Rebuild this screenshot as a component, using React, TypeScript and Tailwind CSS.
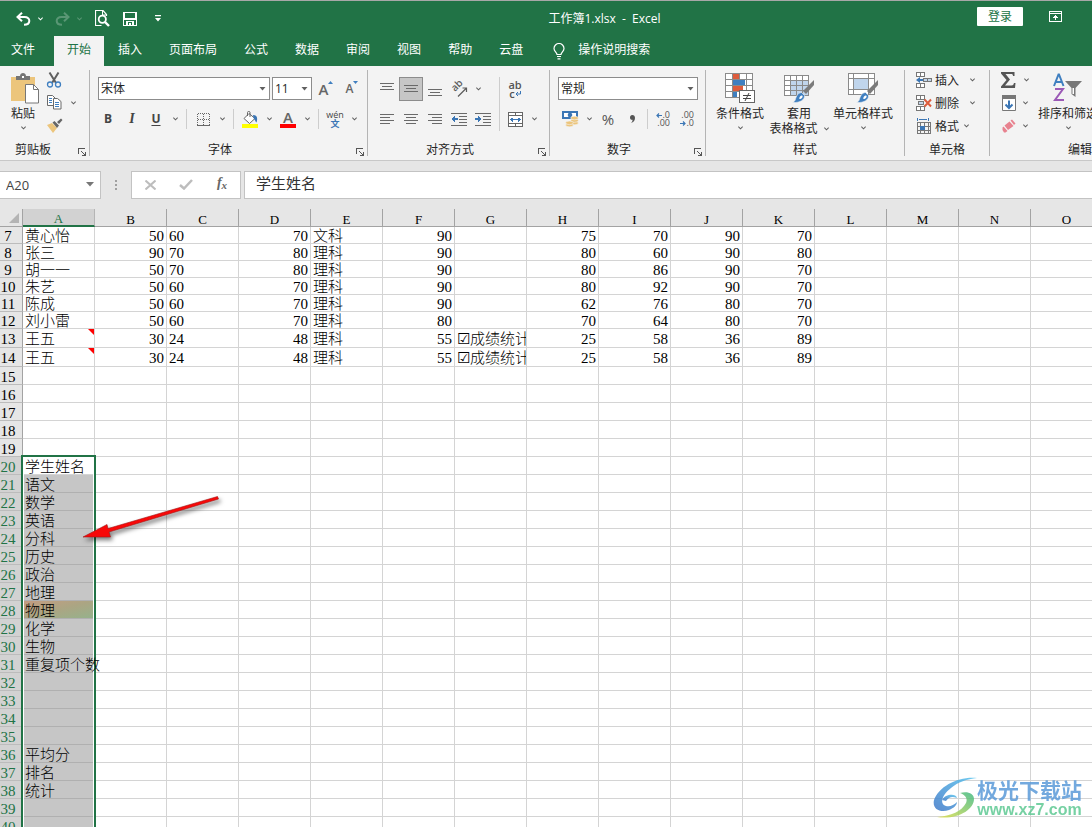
import React from "react";

const UI = "font-['Open_Sans','Noto_Sans_CJK_SC',sans-serif]";

function Chevron({ className = "" }: { className?: string }) {
  return (
    <svg width="5" height="4" viewBox="0 0 5 4" className={className} fill="none" stroke="currentColor" strokeWidth="1.1">
      <path d="M.3.6 2.5 2.8 4.7.6" />
    </svg>
  );
}

function Caret() {
  return (
    <svg width="7" height="4" viewBox="0 0 7 4" className="pointer-events-none absolute top-1/2 right-1 -translate-y-1/2" fill="#606060">
      <path d="M.5 0h6L3.500 3.500z" />
    </svg>
  );
}

type BtnProps = { label: string; className?: string; children: React.ReactNode };

function IconButton({ label, className = "w-6", children }: BtnProps) {
  return (
    <button type="button" aria-label={label} className={`flex h-6 shrink-0 items-center justify-center ${className}`}>
      {children}
    </button>
  );
}

function DropButton({ label, className = "" }: { label: string; className?: string }) {
  return (
    <button type="button" aria-label={label} className={`flex h-6 w-3.5 shrink-0 items-center justify-center text-[#606060] ${className}`}>
      <Chevron />
    </button>
  );
}

function Divider({ className = "mx-1 h-5" }: { className?: string }) {
  return <div className={`w-px shrink-0 bg-[#cdcdcd] ${className}`} />;
}

function Combo({ label, value, className }: { label: string; value: string; className: string }) {
  return (
    <div className={`relative h-[23px] shrink-0 ${className}`}>
      <select aria-label={label} defaultValue={value} className="h-full w-full appearance-none border border-[#8c8c8c] bg-white px-0.5 text-xs text-[#262626]">
        <option>{value}</option>
      </select>
      <Caret />
    </div>
  );
}

function Group({ label, className, launcher = true, labelClass = "", children }: { label: string; className: string; launcher?: boolean; labelClass?: string; children: React.ReactNode }) {
  return (
    <section aria-label={label} className={`flex shrink-0 flex-col ${className}`}>
      <div className="h-[74px]">{children}</div>
      <div className="flex h-5 items-center">
        <span className={`flex-1 text-center leading-[18px] ${labelClass}`}>{label}</span>
        {launcher && (
          <button type="button" aria-label={`${label}设置`} className="flex w-[11px] items-end justify-start pt-1">
            <svg width="9" height="9" viewBox="0 0 9 9" fill="none" stroke="#555" shapeRendering="crispEdges">
              <path d="M.5 6V.5H7M3 3l4 4M7.500 3.500v4H3.500" />
            </svg>
          </button>
        )}
      </div>
    </section>
  );
}

function GroupLine() {
  return <div className="mt-1 h-[86px] w-px shrink-0 bg-[#b4b4b4]" />;
}

function Lines({ rows, blue }: { rows: [number, number, number][]; blue?: "left" | "right" }) {
  return (
    <svg width="16" height="14" viewBox="0 0 16 14" shapeRendering="crispEdges">
      {rows.map(([x, y, w]) => (
        <rect key={y} x={x} y={y} width={w} height="1" fill="#6a6a6a" />
      ))}
      {blue && (
        <path d={blue === "left" ? "M0 7l4-3v2h3v2H4v2z" : "M7 7L3 4v2H0v2h3v2z"} fill="#3b76b5" />
      )}
    </svg>
  );
}

function Brush() {
  return (
    <g>
      <path d="M30 7v5l-8 9-3-3z" fill="#7b7b7b" />
      <path d="M17.500 19.500l3 3c.5 4-4 7.500-12 7 3.500-1.500 2.500-3.500 4-6 1-2.500 3-4 5-4z" fill="#3f7fc0" stroke="#f3f3f3" strokeWidth=".6" />
      <path d="M16 23.500c1.500-1.500 3-1 2.500.5-.5 1.500-2 2.500-3.500 1.500z" fill="#fff" />
    </g>
  );
}

function BigButton({ icon, lines, inlineChevron, className }: { icon: React.ReactNode; lines: string[]; inlineChevron?: boolean; className: string }) {
  return (
    <button type="button" className={`flex shrink-0 flex-col items-center pt-[7px] leading-[15px] whitespace-nowrap ${className}`}>
      {icon}
      <span className="mt-[3px]">{lines[0]}</span>
      {inlineChevron ? (
        <span className="flex items-center gap-1.5">
          {lines[1]}
          <Chevron className="text-[#606060]" />
        </span>
      ) : (
        <Chevron className="mt-[5px] text-[#606060]" />
      )}
    </button>
  );
}

function CellIcon({ kind }: { kind: "insert" | "delete" | "format" }) {
  if (kind === "format")
    return (
      <svg width="16" height="16" viewBox="0 0 16 16" shapeRendering="crispEdges" fill="none">
        <path d="M1.500 0v3M12.500 0v3M3 1.500h8" stroke="#3b76b5" />
        <path d="M1.500 4.500h13v11h-13zM1 8.500h14M1 12.500h14M4.500 4v12M8.500 4v12M12.500 4v12" stroke="#777" />
        <path d="M4 8h5v4H4z" fill="#3b76b5" />
      </svg>
    );
  return (
    <svg width="16" height="16" viewBox="0 0 16 16" fill="none">
      <g shapeRendering="crispEdges" stroke="#777">
        <path d="M.5.5h4v4h-4zM4.500.5h4v4h-4zM.5 11.500h4v4h-4zM4.500 11.500h4v4h-4z" fill="#fff" />
        {kind === "insert" ? (
          <path d="M7.500 6.500h8v3h-8zM11.500 6v4" fill="#c3d6ea" />
        ) : (
          <path d="M2.500 6.500h5v3h-5z" fill="#c3d6ea" />
        )}
      </g>
      {kind === "insert" ? (
        <path d="M0 8l4-3v2h3v2H4v2z" fill="#3b76b5" />
      ) : (
        <path d="M8.500 4.500l6.500 7M15 4.500l-6.500 7" stroke="#dd5c3c" strokeWidth="2" />
      )}
    </svg>
  );
}

function TitleBar() {
  return (
    <header className="flex h-[35px] shrink-0 items-center text-white">
      <div className="flex w-[232px] shrink-0 items-center pl-4">
        <button type="button" aria-label="撤消" className="w-[15px]">
          <svg width="15" height="14" viewBox="0 0 15 14" fill="none" stroke="#fff" strokeWidth="2">
            <path d="M6 .8 1.500 5 6 9.200M2 5h6.500c6.500 0 6.500 7.800-.5 7.800" />
          </svg>
        </button>
        <button type="button" aria-label="撤消列表" className="flex w-[18px] justify-center"><Chevron /></button>
        <button type="button" aria-label="恢复" className="ml-1.5 w-[15px] opacity-25">
          <svg width="15" height="14" viewBox="0 0 15 14" fill="none" stroke="#fff" strokeWidth="2">
            <path d="M9 .8 13.500 5 9 9.200M13 5H6.500C0 5 0 12.800 7 12.800" />
          </svg>
        </button>
        <button type="button" aria-label="恢复列表" className="flex w-[18px] justify-center opacity-25"><Chevron /></button>
        <button type="button" aria-label="打印预览" className="ml-[7px] w-[15px]">
          <svg width="15" height="17" viewBox="0 0 15 17" fill="none" stroke="#fff">
            <path d="M11.500 6V4.500L8 .5H.5v15h6" strokeWidth="1.200" />
            <path d="M7.500.5V5h4" />
            <circle cx="7.300" cy="9.300" r="3.600" strokeWidth="1.800" />
            <path d="M10 12l4 4" strokeWidth="2.400" />
          </svg>
        </button>
        <button type="button" aria-label="保存" className="ml-[13px] w-[15px]">
          <svg width="14" height="14" viewBox="0 0 14 14" shapeRendering="crispEdges">
            <path fillRule="evenodd" fill="#fff" d="M0 0h14v14H0zM2 1v5h10V1zM1 8v5h2v-4h8v4h2V8zM5 10v3h1v-2h2v2h1v-3z" />
          </svg>
        </button>
        <button type="button" aria-label="自定义快速访问工具栏" className="ml-[17px] w-[7px]">
          <svg width="6" height="7" viewBox="0 0 6 7" fill="#fff">
            <path d="M0 0h6v1.200H0zM0 3h6L3 6.500z" />
          </svg>
        </button>
      </div>
      <h1 className="flex-1 pt-px text-center text-xs whitespace-pre">{"工作簿1.xlsx  -  Excel"}</h1>
      <div className="flex w-[115px] shrink-0 items-center">
        <button type="button" className="mb-1 h-[19px] w-[46px] rounded-[1px] bg-white text-xs text-[#217346]">登录</button>
        <button type="button" aria-label="功能区显示选项" className="mb-1 ml-[26px]">
          <svg width="13" height="11" viewBox="0 0 13 11" fill="none" stroke="#fff" shapeRendering="crispEdges">
            <path d="M.5.5h12v9.500H.5zM1 2.500h11M6.500 4v5M5 5.500h3M4 6.500h5" />
          </svg>
        </button>
      </div>
    </header>
  );
}

const TABS = ["插入", "页面布局", "公式", "数据", "审阅", "视图", "帮助", "云盘"];

function Tabs() {
  return (
    <nav className="flex h-[30px] shrink-0 items-stretch gap-px text-xs whitespace-nowrap text-white">
      <button type="button" className="pr-[18px] pl-[11px] pb-0.5">文件</button>
      <button type="button" className="bg-[#f3f3f3] px-[13px] pb-0.5 text-[#217346]">开始</button>
      {TABS.map((t) => (
        <button type="button" key={t} className="px-[13px] pb-0.5">{t}</button>
      ))}
      <button type="button" className="flex items-center gap-[13px] pb-0.5 pl-4">
        <svg width="12" height="17" viewBox="0 0 12 17" fill="none" stroke="#fff" strokeWidth="1.200" className="mt-0.5">
          <path d="M4 11.500C4 9.500 1 8.500 1 5.500a5 5 0 0 1 10 0c0 3-3 4-3 6zM4 13.500h4M4.500 15.800h3" />
        </svg>
        操作说明搜索
      </button>
    </nav>
  );
}

function Ribbon() {
  return (
    <div className="flex h-[94px] shrink-0 overflow-hidden bg-[#f3f3f3] text-xs text-[#262626]">
      <Group label="剪贴板" className="w-[89px]" labelClass="pr-3">
        <div className="flex">
          <BigButton
            className="w-[46px]"
            lines={["粘贴"]}
            icon={
              <svg width="28" height="31" viewBox="0 0 28 31" className="-mb-px ml-1" fill="none">
                <path d="M0 4h24v24H0z" fill="#ecc57c" />
                <path d="M5 7V3h4c0-4 6-4 6 0h4v4z" fill="#757575" />
                <path d="M11 3h2v2h-2z" fill="#fff" />
                <path d="M14.500 11.500h8l5 5v13.500h-13z" fill="#fff" stroke="#777" />
                <path d="M22.500 11.500v5h5" stroke="#777" />
              </svg>
            }
          />
          <div className="pt-0.5">
            <button type="button" aria-label="剪切" className="flex h-[23px] items-center">
              <svg width="16" height="16" viewBox="0 0 16 16" fill="none">
                <path d="M3.500.5 10 11M12.500.5 6 11" stroke="#606060" strokeWidth="2" />
                <circle cx="4" cy="12.500" r="2.500" stroke="#3f7fc0" strokeWidth="1.300" />
                <circle cx="12" cy="12.500" r="2.500" stroke="#3f7fc0" strokeWidth="1.300" />
              </svg>
            </button>
            <div className="flex h-[23px] items-center">
              <button type="button" aria-label="复制">
                <svg width="16" height="15" viewBox="0 0 16 15" fill="#fff" stroke="#6a6a6a">
                  <path d="M1.500.5h5l3 3v7h-8z" />
                  <path d="M7.500 3.500h4l3.500 3v7.500H7.500z" />
                  <path d="M3 3.500h3M3 5.500h3M3 7.500h3M9 7.500h4M9 9.500h4M9 11.500h4" stroke="#3f7fc0" />
                </svg>
              </button>
              <DropButton label="复制选项" className="ml-1" />
            </div>
            <button type="button" aria-label="格式刷" className="flex h-[23px] items-center">
              <svg width="17" height="15" viewBox="0 0 17 15">
                <path d="M1 7l5-2 5 5-4 5z" fill="#ecc57c" />
                <path d="M6.500 4.500l2-1.500L13 7.500l-2 2.500zM11 4l4-3.500L16.500 2 13 6z" fill="#666" />
              </svg>
            </button>
          </div>
        </div>
      </Group>
      <GroupLine />

      <Group label="字体" className="w-[277px]" labelClass="pr-1.5">
        <div className="flex flex-col gap-[7px] pt-[11px]">
          <div className="flex h-[23px] items-center gap-0.5 pl-2">
            <Combo label="字体" value="宋体" className="w-[172px]" />
            <Combo label="字号" value="11" className="w-10" />
            <IconButton label="增大字号" className="w-6">
              <span className="text-[15px] leading-5 font-semibold text-[#666]">A</span>
              <svg width="5" height="3" viewBox="0 0 5 3" className="mb-3" fill="#3f7fc0"><path d="M0 3h5L2.500 0z" /></svg>
            </IconButton>
            <IconButton label="减小字号">
              <span className="text-xs leading-5 font-semibold text-[#666]">A</span>
              <svg width="5" height="3" viewBox="0 0 5 3" className="mb-3" fill="#3f7fc0"><path d="M0 0h5L2.500 3z" /></svg>
            </IconButton>
          </div>
          <div className="flex items-center pl-1.5 text-xs text-[#444]">
            <IconButton label="加粗"><b>B</b></IconButton>
            <IconButton label="倾斜"><i className="font-['Liberation_Serif',serif] text-sm font-bold">I</i></IconButton>
            <IconButton label="下划线"><b className="underline underline-offset-2">U</b></IconButton>
            <DropButton label="下划线选项" />
            <Divider />
            <IconButton label="边框">
              <svg width="13" height="13" viewBox="0 0 13 13" fill="none" stroke="#666" shapeRendering="crispEdges">
                <path d="M.5.5h12M.5 6.500h12M.5.5v12M6.500.5v12M12.500.5v12" strokeDasharray="1 1" />
                <path d="M0 12.500h13" />
              </svg>
            </IconButton>
            <DropButton label="边框选项" />
            <Divider />
            <IconButton label="填充颜色">
              <svg width="16" height="17" viewBox="0 0 16 17" fill="none">
                <path d="M7 2.500l6 5-5.500 5L2 7.500z" fill="#fff" stroke="#666" />
                <path d="M5.500 5V1.500c0-1.500 2.500-1.500 2.500 0V6" stroke="#666" />
                <path d="M11 4c4 0 5 3 3.500 7.500-1 0-1.500-3-3-4.500z" fill="#3b76b5" />
                <path d="M0 13h16v4H0z" fill="#ff0" />
              </svg>
            </IconButton>
            <DropButton label="填充颜色选项" />
            <IconButton label="字体颜色" className="w-6 flex-col">
              <span className="text-[15px] leading-[13px] font-semibold text-[#666]">A</span>
              <span className="h-1 w-4 bg-[#f00]" />
            </IconButton>
            <DropButton label="字体颜色选项" />
            <Divider />
            <IconButton label="拼音指南" className="w-6 flex-col">
              <span className="text-[9px] leading-[9px]">wén</span>
              <span className="text-[9px] leading-[10px] font-bold text-[#3b76b5]">文</span>
            </IconButton>
            <DropButton label="拼音选项" />
          </div>
        </div>
      </Group>
      <GroupLine />

      <Group label="对齐方式" className="w-[181px]" labelClass="pr-1.5">
        <div className="flex pt-[11px] pl-[7px]">
          <div className="flex flex-col gap-1.5">
            <div className="flex">
              <IconButton label="顶端对齐"><Lines rows={[[1, 1, 14], [3, 4, 10], [1, 7, 14]]} /></IconButton>
              <IconButton label="垂直居中" className="w-6 border border-[#8c8c8c] bg-[#c6c6c6]"><Lines rows={[[1, 3, 14], [3, 6, 10], [1, 9, 14]]} /></IconButton>
              <IconButton label="底端对齐"><Lines rows={[[1, 7, 14], [3, 10, 10], [1, 13, 14]]} /></IconButton>
              <IconButton label="方向">
                <svg width="18" height="18" viewBox="0 0 18 18" fill="none" stroke="#5c5c5c">
                  <g transform="translate(5 12) rotate(-45)">
                    <text x="0" y="0" fontSize="10" fontWeight="600" fill="#5c5c5c" stroke="none">ab</text>
                  </g>
                  <path d="M8 16.500 16 8.500M12.500 8h4v4" strokeWidth="1.200" />
                </svg>
              </IconButton>
              <DropButton label="方向选项" />
            </div>
            <div className="flex">
              <IconButton label="左对齐"><Lines rows={[[1, 2, 14], [1, 5, 10], [1, 8, 14], [1, 11, 10]]} /></IconButton>
              <IconButton label="居中"><Lines rows={[[1, 2, 14], [3, 5, 10], [1, 8, 14], [3, 11, 10]]} /></IconButton>
              <IconButton label="右对齐"><Lines rows={[[1, 2, 14], [5, 5, 10], [1, 8, 14], [5, 11, 10]]} /></IconButton>
              <IconButton label="减少缩进量"><Lines blue="left" rows={[[0, 1, 16], [8, 4, 8], [8, 7, 8], [8, 10, 8], [0, 13, 16]]} /></IconButton>
              <IconButton label="增加缩进量"><Lines blue="right" rows={[[0, 1, 16], [8, 4, 8], [8, 7, 8], [8, 10, 8], [0, 13, 16]]} /></IconButton>
            </div>
          </div>
          <Divider className="mr-[3px] ml-1 h-[54px]" />
          <div className="flex flex-col gap-1.5">
            <IconButton label="自动换行" className="w-6 flex-col">
              <span className="text-[11px] leading-[9px] font-semibold text-[#555]">ab</span>
              <span className="flex items-center text-[11px] leading-[9px] font-semibold text-[#555]">
                c
                <svg width="6" height="6" viewBox="0 0 6 6" fill="none" stroke="#3b76b5"><path d="M5.500 0v3H1M3 1 1 3l2 2" /></svg>
              </span>
            </IconButton>
            <div className="flex">
              <IconButton label="合并后居中">
                <svg width="15" height="15" viewBox="0 0 15 15" fill="none" stroke="#666" shapeRendering="crispEdges">
                  <path d="M.5.5h14v14H.5zM0 3.500h15M0 11.500h15M7.500 0v3M7.500 12v3" fill="#fff" />
                  <path d="M2 7.500h11M3.500 6v3M4.500 5.500v4M10.500 5.500v4M11.500 6v3" stroke="#3b76b5" />
                </svg>
              </IconButton>
              <DropButton label="合并选项" />
            </div>
          </div>
        </div>
      </Group>
      <GroupLine />

      <Group label="数字" className="w-[155px]" labelClass="pr-1.5">
        <div className="flex flex-col gap-[7px] pt-[11px] pl-2">
          <Combo label="数字格式" value="常规" className="w-[140px]" />
          <div className="flex items-center text-[#555]">
            <IconButton label="会计数字格式">
              <svg width="17" height="16" viewBox="0 0 17 16" fill="none">
                <path d="M0 0h16v8H0z" fill="#3b76b5" />
                <path d="M2 2h12v4H2z" fill="#fff" />
                <circle cx="8" cy="4" r="2.300" fill="#3b76b5" />
                <g fill="#ecc57c" stroke="#f3f3f3" strokeWidth=".6">
                  <ellipse cx="12.500" cy="12" rx="3.800" ry="1.800" /><ellipse cx="12.500" cy="9.500" rx="3.800" ry="1.800" /><ellipse cx="12.500" cy="7" rx="3.800" ry="1.800" />
                  <ellipse cx="7.500" cy="14" rx="3.800" ry="1.800" /><ellipse cx="7.500" cy="11.800" rx="3.800" ry="1.800" />
                </g>
              </svg>
            </IconButton>
            <DropButton label="货币选项" />
            <IconButton label="百分比样式"><span className="text-[15px]">%</span></IconButton>
            <IconButton label="千位分隔样式"><svg width="5" height="8" viewBox="0 0 5 8" fill="#555"><path d="M2.200 0C4 0 5 1.200 5 3 5 5.500 3.500 7.500 1 8c1-1 1.700-2 1.500-3.200C1 5 0 4 0 2.500 0 1 1 0 2.200 0z" /></svg></IconButton>
            <Divider className="ml-[3px] h-5" />
            <IconButton label="增加小数位数" className="w-[22px] flex-col items-end text-[9px] leading-2">
              <span className="flex items-center">
                <svg width="6" height="5" viewBox="0 0 6 5" fill="none" stroke="#3b76b5" strokeWidth="1.200"><path d="M6 2.500H1M3 .5l-2 2 2 2" /></svg>.0
              </span>
              <span>.00</span>
            </IconButton>
            <IconButton label="减少小数位数" className="w-6 flex-col items-end text-[9px] leading-2">
              <span>.00</span>
              <span className="flex items-center">
                <svg width="6" height="5" viewBox="0 0 6 5" fill="none" stroke="#3b76b5" strokeWidth="1.200"><path d="M0 2.500h5M3 .5l2 2-2 2" /></svg>.0
              </span>
            </IconButton>
          </div>
        </div>
      </Group>
      <GroupLine />

      <Group label="样式" className="w-[198px]" launcher={false}>
        <div className="flex pl-1.5">
          <BigButton
            className="w-14"
            lines={["条件格式"]}
            icon={
              <svg width="30" height="30" viewBox="0 0 30 30" shapeRendering="crispEdges" fill="none">
                <path d="M.5.500h27v24H.5z" fill="#fff" />
                <path d="M8 1h6v5H8zM8 13h10v5H8z" fill="#dd5c3c" />
                <path d="M8 7h12v5H8zM8 19h4v5H8z" fill="#3f7fc0" />
                <path d="M.5.500h27v24H.5zM0 6.500h28M0 12.500h28M0 18.500h28M7.500 0v25M14.500 0v6M21.500 0v25" stroke="#8a8a8a" />
                <path d="M14.500 17.500h15v12h-15z" fill="#fff" stroke="#666" />
                <path d="M18 22.500h8M18 25.500h8" stroke="#444" />
                <path d="M24 20l-4 8" stroke="#444" shapeRendering="auto" />
              </svg>
            }
          />
          <BigButton
            className="w-[62px]"
            inlineChevron
            lines={["套用", "表格格式"]}
            icon={
              <svg width="30" height="30" viewBox="0 0 30 30" fill="none">
                <g shapeRendering="crispEdges">
                  <path d="M.5 2.500h24v20H.5z" fill="#fff" />
                  <path d="M7 8h17v15H7z" fill="#c0d5ec" />
                  <path d="M.5 2.500h24v20H.5zM0 7.500h25M0 12.500h25M0 17.500h25M6.500 2v21M12.500 2v21M18.500 2v21" stroke="#8a8a8a" />
                </g>
                <Brush />
              </svg>
            }
          />
          <BigButton
            className="w-[66px]"
            lines={["单元格样式"]}
            icon={
              <svg width="30" height="30" viewBox="0 0 30 30" fill="none">
                <g shapeRendering="crispEdges">
                  <path d="M.5.500h26v21H.5z" fill="#fff" />
                  <path d="M6 6h14v10H6z" fill="#c0d5ec" />
                  <path d="M.5.500h26v21H.5zM0 5.500h27M0 16.500h27M5.500 0v22M20.500 0v22" stroke="#8a8a8a" />
                </g>
                <Brush />
              </svg>
            }
          />
        </div>
      </Group>
      <GroupLine />

      <Group label="单元格" className="w-[84px]" launcher={false}>
        <div className="pt-0.5 pl-[11px]">
          {(["insert", "delete", "format"] as const).map((kind, i) => (
            <button type="button" key={kind} className="flex h-[23px] items-center gap-[3px]">
              <CellIcon kind={kind} />
              <span className="pt-0.5">{["插入", "删除", "格式"][i]}</span>
              <Chevron className={kind === "format" ? "ml-0.5 text-[#606060]" : "ml-2 text-[#606060]"} />
            </button>
          ))}
        </div>
      </Group>
      <GroupLine />

      <Group label="编辑" className="w-[180px]" launcher={false}>
        <div className="flex pl-2.5">
          <div className="w-9 pt-0.5">
            <div className="flex h-[23px] items-center">
              <button type="button" aria-label="自动求和" className="w-[19px]">
                <svg width="17" height="16" viewBox="0 0 17 16" fill="#555"><path d="M1 0h13.500v4H13c0-1.500-.5-2-2-2H5.500L10 7.500 5 13.500h6.500c1.500 0 2-.8 2.500-2.500H15.500L15 16H1v-1.500L6.500 8 1 1.500z" /></svg>
              </button>
              <DropButton label="求和选项" />
            </div>
            <div className="flex h-[23px] items-center">
              <button type="button" aria-label="填充" className="w-[18px] pl-0.5">
                <svg width="14" height="16" viewBox="0 0 14 16" fill="none">
                  <path d="M.5.5h13v15H.5z" fill="#fff" stroke="#777" />
                  <path d="M0 0h14v4H0z" fill="#777" />
                  <path d="M7 5.500V13M3.500 9.500 7 13l3.500-3.500" stroke="#3b76b5" strokeWidth="2" />
                </svg>
              </button>
              <DropButton label="填充选项" />
            </div>
            <div className="flex h-[23px] items-center">
              <button type="button" aria-label="清除" className="w-[18px] pl-0.5">
                <svg width="14" height="14" viewBox="0 0 14 14" fill="#e8828f"><path d="M8.500 1.500 10 .5l3.500 4L12 6zM7.500 2.500l4 4.500-5.500 4-3.500-4.500zM1.500 7.500l4 4.500-2 1.500H2L.500 11V8.500z" /></svg>
              </button>
              <DropButton label="清除选项" />
            </div>
          </div>
          <BigButton
            className="w-16"
            lines={["排序和筛选"]}
            icon={
              <svg width="30" height="30" viewBox="0 0 30 30" fill="none">
                <path d="M1 13 5.500 1.500h.5L10.500 13M2.500 9h7" stroke="#3f7fc0" strokeWidth="2" />
                <path d="M2 16h8L2 27h9" stroke="#9b59b6" strokeWidth="2" />
                <path d="M12 8h17l-6.500 7v9l-4-3v-6z" fill="#777" />
                <path d="M19.500 15h1.500v6h-1.500z" fill="#fff" />
              </svg>
            }
          />
        </div>
      </Group>
    </div>
  );
}

function FormulaBar() {
  return (
    <div className="flex h-12 shrink-0 items-center border-t border-[#c8c8c8] bg-[#e6e6e6]">
      <div className="relative h-7 w-[101px] shrink-0">
        <input aria-label="名称框" defaultValue="A20" className="h-full w-full border border-l-0 border-[#c3c3c3] bg-white pl-1.5 text-[13px] text-[#444]" />
        <svg width="8" height="5" viewBox="0 0 8 5" className="pointer-events-none absolute top-[11px] right-[7px]" fill="#777"><path d="M0 0h8L4 4.500z" /></svg>
      </div>
      <svg width="30" height="12" viewBox="0 0 30 12" fill="#a0a0a0" className="shrink-0"><path d="M14 1h2v2h-2zM14 5h2v2h-2zM14 9h2v2h-2z" /></svg>
      <div className="flex h-7 w-[110px] shrink-0 items-center justify-around border border-[#c3c3c3] bg-white">
        <button type="button" aria-label="取消" className="flex w-9 justify-center"><svg width="11" height="10" viewBox="0 0 11 10" fill="none" stroke="#bdbdbd" strokeWidth="2"><path d="M.5.5l10 9M10.500.5l-10 9" /></svg></button>
        <button type="button" aria-label="输入" className="flex w-9 justify-center"><svg width="14" height="11" viewBox="0 0 14 11" fill="none" stroke="#bdbdbd" strokeWidth="2.500"><path d="M1 6l4 3.500L13 1" /></svg></button>
        <button type="button" aria-label="插入函数" className="flex w-9 justify-center font-['Liberation_Serif',serif] text-sm leading-5 font-bold text-[#666] italic">f<span className="text-[11px] leading-6">x</span></button>
      </div>
      <input aria-label="编辑栏" defaultValue="学生姓名" className="ml-[3px] h-7 min-w-0 flex-1 border border-r-0 border-[#c3c3c3] bg-white pb-1 pl-[11px] text-[15px] text-[#333]" />
    </div>
  );
}

const COLS = "ABCDEFGHIJKLMNO".split("");
const TEXT_COLS = "ACEG";

const SCORES: Record<number, string[]> = {
  7: ["黄心怡", "50", "60", "70", "文科", "90", "", "75", "70", "90", "70"],
  8: ["张三", "90", "70", "80", "理科", "90", "", "80", "60", "90", "80"],
  9: ["胡一一", "50", "70", "80", "理科", "90", "", "80", "86", "90", "70"],
  10: ["朱艺", "50", "60", "70", "理科", "90", "", "80", "92", "90", "70"],
  11: ["陈成", "50", "60", "70", "理科", "90", "", "62", "76", "80", "70"],
  12: ["刘小雷", "50", "60", "70", "理科", "80", "", "70", "64", "80", "70"],
  13: ["王五", "30", "24", "48", "理科", "55", "☑成绩统计", "25", "58", "36", "89"],
  14: ["王五", "30", "24", "48", "理科", "55", "☑成绩统计", "25", "58", "36", "89"],
  20: ["学生姓名"], 21: ["语文"], 22: ["数学"], 23: ["英语"], 24: ["分科"], 25: ["历史"],
  26: ["政治"], 27: ["地理"], 28: ["物理"], 29: ["化学"], 30: ["生物"], 31: ["重复项个数"],
  36: ["平均分"], 37: ["排名"], 38: ["统计"],
};

const ROWS = Array.from({ length: 34 }, (_, i) => i + 7);

function rowHeight(r: number) {
  if (r <= 12) return "h-[17px]";
  return r <= 14 ? "h-[19px]" : "h-[18px]";
}

function cellTone(r: number, c: string) {
  if (c !== "A" || r < 21) return "border-[#d4d4d4]";
  if (r === 28) return "border-[#b0b0b0] bg-linear-to-br from-[#c49c82] via-[#aba583] to-[#95b28c]";
  return "border-[#b0b0b0] bg-[#c6c6c6]";
}

function Sheet() {
  return (
    <div className="relative min-h-0 flex-1 overflow-hidden bg-white">
      <table className="w-[1103px] table-fixed border-separate border-spacing-0 font-['Liberation_Serif','Noto_Sans_CJK_SC',serif] text-[15px] leading-[14px] font-light text-black">
        <colgroup>
          <col className="w-[23px]" />
          {COLS.map((c) => <col key={c} className="w-[72px]" />)}
        </colgroup>
        <thead>
          <tr className="h-[18px] bg-[#e6e6e6]">
            <th aria-label="全选" className="border-r border-b border-[#a3a3a3] p-0">
              <svg width="10" height="10" viewBox="0 0 10 10" className="ml-[9px]" fill="#b4b4b4"><path d="M10 0v10H0z" /></svg>
            </th>
            {COLS.map((c) => (
              <th
                key={c}
                scope="col"
                className={`border-r p-0 pt-[3px] text-[13px] leading-[13px] font-normal ${c === "A" ? "border-r-[#b5b5b5] border-b-2 border-b-[#217346] bg-[#d2d2d2] text-[#217346]" : "border-b border-[#a3a3a3]"}`}
              >
                {c}
              </th>
            ))}
          </tr>
        </thead>
        <tbody>
          {ROWS.map((r) => (
            <tr key={r} className={rowHeight(r)}>
              <th scope="row" className={`border-r border-b border-r-[#a3a3a3] border-b-[#bcbcbc] p-0 pt-0.5 pr-1.5 text-center font-normal ${r >= 20 ? "bg-[#d2d2d2] text-[#217346]" : "bg-[#e6e6e6]"}`}>
                {r}
              </th>
              {COLS.map((c, i) => {
                const v = SCORES[r]?.[i] ?? "";
                const marked = c === "A" && (r === 13 || r === 14);
                const anchor = c === "A" && r === 20;
                return (
                  <td
                    key={c}
                    className={`border-r border-b px-0.5 pt-0.5 pb-0 whitespace-nowrap ${TEXT_COLS.includes(c) ? "text-left" : "text-right"} ${c === "G" ? "overflow-hidden" : ""} ${marked || anchor ? "relative" : ""} ${cellTone(r, c)}`}
                  >
                    {anchor && (
                      <div className="absolute -inset-x-0.5 -top-0.5 z-[1] h-[400px] border-2 border-[#217346] shadow-[inset_0_0_0_1px_#fff]" />
                    )}
                    {v && <span className="relative z-10">{v}</span>}
                    {marked && <i className="absolute top-0 right-0 size-1.5 bg-[#f00] [clip-path:polygon(0_0,100%_0,100%_100%)]" />}
                  </td>
                );
              })}
            </tr>
          ))}
        </tbody>
      </table>

      <svg width="150" height="60" viewBox="0 0 150 60" className="absolute top-[280px] left-[80px] z-20 drop-shadow-[2px_3px_2px_rgba(0,0,0,0.5)]">
        <path d="M137.500 7.500l1 2.500L29 43l1.500 5L3 48l24-12.500 1 4z" fill="#f80808" stroke="#a01818" strokeWidth=".6" />
      </svg>

      <div className="absolute right-2.5 bottom-2 z-20 flex items-center opacity-85">
        <svg width="44" height="42" viewBox="0 0 44 42" fill="none">
          <defs>
            <linearGradient id="wmBlue" x1="0" y1="1" x2="1" y2="0"><stop stopColor="#3f78c8" /><stop offset="1" stopColor="#57c3ee" /></linearGradient>
            <linearGradient id="wmGreen" x1="0" y1="1" x2="1" y2="0"><stop stopColor="#e3e04a" /><stop offset="1" stopColor="#3fb984" /></linearGradient>
          </defs>
          <path d="M44 1C26-1 6 9 1 23c-2 9 6 13 15 10 5-2 8-5 8-8-3 3-7 5-11 4-7-2-4-11 5-18C25 5 34 2 44 1z" fill="url(#wmBlue)" />
          <path d="M9 23c3-6 14-7 15-2-5-2-8-1-11 3z" fill="url(#wmBlue)" />
          <path d="M27 16c7-2 14 0 14 6C41 33 24 43 4 40c14-1 25-6 29-14 2-5-1-8-6-10z" fill="url(#wmGreen)" />
        </svg>
        <div className="flex flex-col">
          <span className="font-['Noto_Sans_CJK_SC',sans-serif] text-[21px] leading-6 font-bold text-[#5b9bd9]">极光下载站</span>
          <span className="text-center font-['Liberation_Sans',sans-serif] text-base leading-[18px] font-bold text-[#5fc994]">www.xz7.com</span>
        </div>
      </div>
    </div>
  );
}

export default function App() {
  return (
    <div className={`flex h-screen flex-col overflow-hidden bg-[#217346] ${UI}`}>
      <div className="h-px shrink-0 bg-[#a8a8a8]" />
      <TitleBar />
      <Tabs />
      <Ribbon />
      <FormulaBar />
      <div className="h-px shrink-0 bg-[#e6e6e6]" />
      <Sheet />
    </div>
  );
}
